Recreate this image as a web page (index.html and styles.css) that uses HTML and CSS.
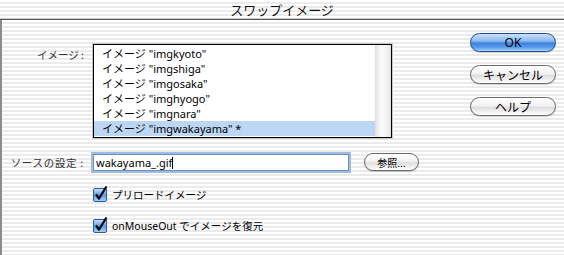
FILE: index.html
```html
<!DOCTYPE html>
<html lang="ja">
<head>
  <meta charset="UTF-8" />
  <title>スワップイメージ</title>
  <link rel="stylesheet" href="styles.css">
</head>
<body>
  <div class="window">
    <!-- barra de título -->
    <div class="titlebar">スワップイメージ</div>

    <div class="content">
      <div class="form">
        <div class="row row-list">
          <div class="label">イメージ :</div>
          <div class="listbox">
            <ul class="items">
              <li>イメージ "imgkyoto"</li>
              <li>イメージ "imgshiga"</li>
              <li>イメージ "imgosaka"</li>
              <li>イメージ "imghyogo"</li>
              <li>イメージ "imgnara"</li>
              <li class="selected">イメージ "imgwakayama" *</li>
            </ul>
            <div class="scrolltrack"></div>
          </div>
        </div>

        <div class="row row-source">
          <div class="label wide">ソースの設定 :</div>
          <div class="field">wakayama_.gif<span class="caret"></span></div>
          <button class="pill small">参照...</button>
        </div>

        <div class="check">
          <svg class="box" width="15" height="16" viewBox="0 0 15 16">
            <defs>
              <linearGradient id="cb1" x1="0" y1="0" x2="0" y2="1">
                <stop offset="0" stop-color="#cfe4fb"/>
                <stop offset="0.5" stop-color="#5a9be8"/>
                <stop offset="1" stop-color="#a9d2fb"/>
              </linearGradient>
            </defs>
            <rect x="0.5" y="2.5" width="13" height="13" rx="1.5" fill="url(#cb1)" stroke="#2f5c98"/>
            <path d="M3 8.5 L6 12.5 L13.5 0.5" fill="none" stroke="#000" stroke-width="2.2" stroke-linejoin="round"/>
          </svg>
          <span>プリロードイメージ</span>
        </div>

        <div class="check">
          <svg class="box" width="15" height="16" viewBox="0 0 15 16">
            <rect x="0.5" y="2.5" width="13" height="13" rx="1.5" fill="url(#cb1)" stroke="#2f5c98"/>
            <path d="M3 8.5 L6 12.5 L13.5 0.5" fill="none" stroke="#000" stroke-width="2.2" stroke-linejoin="round"/>
          </svg>
          <span>onMouseOut でイメージを復元</span>
        </div>
      </div>

      <div class="buttons">
        <button class="pill default">OK</button>
        <button class="pill">キャンセル</button>
        <button class="pill">ヘルプ</button>
      </div>
    </div>
  </div>
</body>
</html>
```

FILE: styles.css
```css
body {
  margin: 0;
  width: 564px;
  height: 255px;
  overflow: hidden;
  font-family: "Noto Sans", "Noto Sans CJK JP", sans-serif;
  font-size: 11px;
  color: #000;
  background: repeating-linear-gradient(to bottom, #ffffff 0, #ffffff 2px, #ebebeb 2px, #ebebeb 4px);
}

.window {
  height: 255px;
}

.titlebar {
  height: 19px;
  line-height: 20px;
  text-align: center;
  font-family: "Noto Sans CJK JP", sans-serif;
  font-size: 13px;
  color: #111;
  border-bottom: 1px solid #555;
  box-shadow: inset 0 -1px 0 #ccc;
}

.content {
  display: flex;
  height: 235px;
  border-left: 2px solid #8a8a8a;
}

.form {
  flex: 1;
  padding-top: 24px;
}

.row {
  display: flex;
}

.label {
  width: 82px;
  margin-right: 9px;
  text-align: right;
  font-family: "Noto Sans CJK JP", sans-serif;
  font-size: 10.5px;
  color: #333;
  white-space: nowrap;
}

.label.wide {
  letter-spacing: 0.7px;
}

.row-list .label {
  padding-top: 3px;
}

.listbox {
  display: flex;
  width: 297px;
  height: 92px;
  border: 1px solid #000;
  box-shadow: 0 0 0 1px #c8c8c8;
  background: #fff;
}

.items {
  list-style: none;
  margin: 0;
  padding: 1px 0 0;
  flex: 1;
}

.items li {
  height: 15px;
  line-height: 15px;
  padding-left: 8px;
  white-space: nowrap;
}

.items li.selected {
  background: #bdd6f4;
}

.scrolltrack {
  width: 15px;
  background: linear-gradient(to right, #e6e6e6, #fbfbfb 35%, #f2f2f2 70%, #e2e2e2);
  border-left: 1px solid #e0e0e0;
}

.row-source {
  margin-top: 15px;
  align-items: center;
}

.row-source .label {
  padding-top: 1px;
}

.field {
  width: 250px;
  height: 15px;
  line-height: 15px;
  padding: 0 2px;
  background: #fff;
  border: 1px solid #6e8fbd;
  box-shadow: 0 0 0 2px #9dbde6;
  font-size: 11px;
}

.caret {
  display: inline-block;
  width: 1px;
  height: 12px;
  background: #000;
  vertical-align: -2px;
}

.check {
  display: flex;
  align-items: center;
  margin-left: 91px;
  margin-top: 14px;
  gap: 4px;
}

.check + .check {
  margin-top: 14px;
}

.check span {
  font-size: 10.5px;
  padding-top: 2px;
}

.buttons {
  display: flex;
  flex-direction: column;
  gap: 13px;
  padding-top: 13px;
  padding-right: 8px;
}

.pill {
  width: 86px;
  height: 19px;
  padding: 0;
  border: 1px solid #6b6b6b;
  border-radius: 10px;
  font-family: "Noto Sans CJK JP", sans-serif;
  font-size: 12px;
  line-height: 16px;
  color: #000;
  background: linear-gradient(to bottom, #ffffff 0%, #f2f2f2 45%, #dedede 55%, #f4f4f4 85%, #ffffff 100%);
  box-shadow: 0 1px 1px rgba(0, 0, 0, 0.2);
}

.pill.default {
  border-color: #1f4f95;
  font-family: "Noto Sans", sans-serif;
  background: linear-gradient(to bottom, #c9e0fb 0%, #8dbbf1 40%, #3d83dc 55%, #5d9ef0 80%, #a9d3fb 100%);
}

.pill.small {
  width: 55px;
  height: 18px;
  margin-left: 15px;
  font-size: 10px;
  line-height: 15px;
}
```
